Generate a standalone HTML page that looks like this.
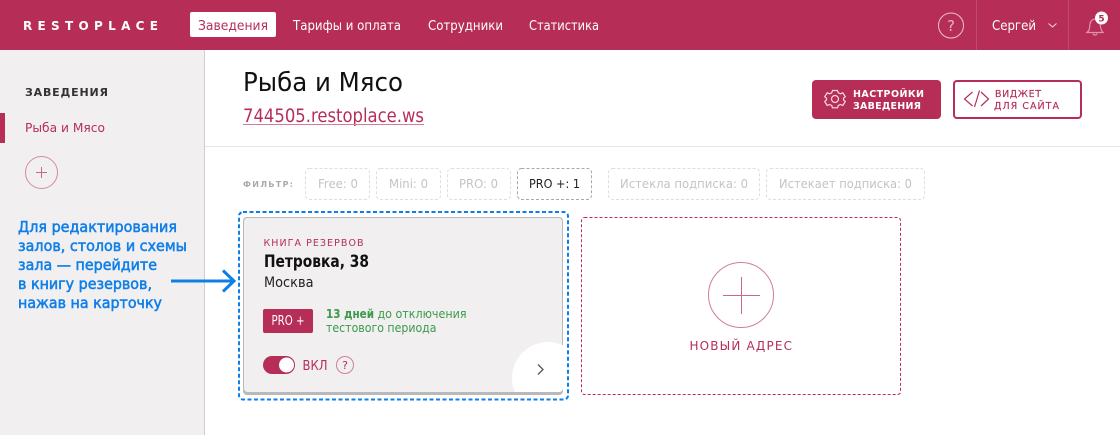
<!DOCTYPE html>
<html lang="ru"><head><meta charset="utf-8"><title>Restoplace</title>
<style>
html,body{margin:0;padding:0;background:#fff;width:1120px;height:435px;overflow:hidden}
svg{display:block}
text{font-family:"DejaVu Sans","Liberation Sans",sans-serif;white-space:pre}
</style></head><body>
<svg width="1120" height="435" viewBox="0 0 1120 435" xmlns="http://www.w3.org/2000/svg">
<rect width="1120" height="435" fill="#fff"/>
<!-- sidebar -->
<rect x="0" y="50" width="204" height="385" fill="#f1eff0"/>
<rect x="204" y="50" width="1" height="385" fill="#cfcfcf"/>
<rect x="205" y="146" width="915" height="1" fill="#e6e6e6"/>
<rect x="0" y="113" width="5" height="30" fill="#b62e58"/>
<text x="25" y="96" font-size="11" font-weight="700" fill="#333" textLength="83" lengthAdjust="spacing">ЗАВЕДЕНИЯ</text>
<text x="25" y="132" font-size="12.500" fill="#b62e58" textLength="80" lengthAdjust="spacingAndGlyphs">Рыба и Мясо</text>
<circle cx="41.500" cy="172.500" r="16" fill="none" stroke="#d58aa3" stroke-width="1"/>
<path d="M36 172.500H47M41.500 167V178" stroke="#c9688a" stroke-width="1" fill="none"/>
<g font-size="15.500" fill="#0f7fe8" stroke="#0f7fe8" stroke-width="0.550">
<text x="18" y="232" textLength="159" lengthAdjust="spacingAndGlyphs">Для редактирования</text>
<text x="18" y="251" textLength="169" lengthAdjust="spacingAndGlyphs">залов, столов и схемы</text>
<text x="18" y="270" textLength="139" lengthAdjust="spacingAndGlyphs">зала — перейдите</text>
<text x="18" y="289" textLength="134" lengthAdjust="spacingAndGlyphs">в книгу резервов,</text>
<text x="18" y="308" textLength="144" lengthAdjust="spacingAndGlyphs">нажав на карточку</text>
</g>
<path d="M171 281H233M223 270.500L234 281L223 291.500" fill="none" stroke="#0f7fe8" stroke-width="3"/>
<!-- header -->
<rect width="1120" height="50" fill="#b62e58"/>
<text x="23" y="30" font-size="12" font-weight="700" fill="#fff" textLength="135" lengthAdjust="spacing">RESTOPLACE</text>
<rect x="190" y="12" width="86" height="25" rx="2" fill="#fff"/>
<text x="198" y="30" font-size="13.500" fill="#b62e58" textLength="70" lengthAdjust="spacingAndGlyphs">Заведения</text>
<g font-size="13.500" fill="#fff">
<text x="293" y="30" textLength="108" lengthAdjust="spacingAndGlyphs">Тарифы и оплата</text>
<text x="428" y="30" textLength="75" lengthAdjust="spacingAndGlyphs">Сотрудники</text>
<text x="529" y="30" textLength="70" lengthAdjust="spacingAndGlyphs">Статистика</text>
<text x="992" y="30" textLength="44" lengthAdjust="spacingAndGlyphs">Сергей</text>
</g>
<circle cx="951" cy="25.500" r="12.500" fill="none" stroke="#e9c3cf" stroke-width="1"/>
<text x="951" y="31" font-size="15" fill="#e3b4c3" text-anchor="middle">?</text>
<rect x="976" y="0" width="1" height="50" fill="#c2496e"/>
<rect x="1068" y="0" width="1" height="50" fill="#c2496e"/>
<path d="M1048.500 23.500L1052.500 27L1056.500 23.500" fill="none" stroke="#f0d5de" stroke-width="1"/>
<path d="M1087 32.500C1090 30 1089.500 27 1090 24C1090.500 20.500 1093 19 1095 19C1098 19 1099.500 21 1100 24C1100.500 27 1100.500 30 1103 32.500Z" fill="none" stroke="#dd94ab" stroke-width="1.200"/>
<path d="M1093 33.500C1093.500 35.500 1096.500 35.500 1097 33.500" fill="none" stroke="#dd94ab" stroke-width="1.200"/>
<circle cx="1101.500" cy="18" r="6.500" fill="#fff"/>
<text x="1101.500" y="21.500" font-size="9" font-weight="700" fill="#b62e58" text-anchor="middle">5</text>
<!-- title -->
<text x="243" y="91" font-size="26" fill="#111" textLength="160" lengthAdjust="spacingAndGlyphs">Рыба и Мясо</text>
<text x="243" y="122" font-size="18.500" fill="#b62e58" textLength="181" lengthAdjust="spacingAndGlyphs">744505.restoplace.ws</text>
<rect x="243" y="124" width="181" height="1" fill="#cf7f9a"/>
<!-- buttons -->
<rect x="812" y="80" width="129" height="39" rx="4" fill="#b62e58"/>
<g fill="none" stroke="#f3dbe3" stroke-width="1.200">
<circle cx="835" cy="99" r="3.500"/>
<path d="M832.500 90.500H837.500L838.300 92.800L840.500 93.800L842.800 92.800L845.300 96.800L843.500 98.300V100L845.300 101.500L842.800 105.500L840.500 104.500L838.300 105.500L837.500 107.800H832.500L831.700 105.500L829.500 104.500L827.200 105.500L824.700 101.500L826.500 100V98.300L824.700 96.800L827.200 92.800L829.500 93.800L831.700 92.800Z"/>
</g>
<g font-size="9.500" font-weight="700" fill="#fff">
<text x="853" y="97" textLength="71" lengthAdjust="spacing">НАСТРОЙКИ</text>
<text x="853" y="109" textLength="68" lengthAdjust="spacing">ЗАВЕДЕНИЯ</text>
</g>
<rect x="954" y="81" width="127" height="37" rx="3" fill="#fff" stroke="#b62e58" stroke-width="2"/>
<path d="M972.500 92L964.500 99L972.500 106M974.500 107L979.500 90.500M981 92L988.500 99L981 106" fill="none" stroke="#b62e58" stroke-width="1.200"/>
<g font-size="9.500" fill="#b62e58" stroke="#b62e58" stroke-width="0.150">
<text x="995" y="97" textLength="46" lengthAdjust="spacing">ВИДЖЕТ</text>
<text x="994" y="109" textLength="65" lengthAdjust="spacing">ДЛЯ САЙТА</text>
</g>
<!-- filters -->
<text x="243" y="187" font-size="8" font-weight="700" fill="#aaa" textLength="50" lengthAdjust="spacing">ФИЛЬТР:</text>
<g fill="none" stroke="#dedede" stroke-dasharray="3 2">
<rect x="305.500" y="168.500" width="64" height="31" rx="4"/>
<rect x="376.500" y="168.500" width="64" height="31" rx="4"/>
<rect x="447.500" y="168.500" width="63" height="31" rx="4"/>
<rect x="608.500" y="168.500" width="151" height="31" rx="4"/>
<rect x="766.500" y="168.500" width="158" height="31" rx="4"/>
</g>
<rect x="517.500" y="168.500" width="74" height="31" rx="4" fill="none" stroke="#a8a8a8" stroke-dasharray="3 2"/>
<g font-size="12.500" fill="#c4c4c4">
<text x="318" y="188" textLength="40" lengthAdjust="spacingAndGlyphs">Free: 0</text>
<text x="389" y="188" textLength="39" lengthAdjust="spacingAndGlyphs">Mini: 0</text>
<text x="459" y="188" textLength="39" lengthAdjust="spacingAndGlyphs">PRO: 0</text>
<text x="620" y="188" textLength="128" lengthAdjust="spacingAndGlyphs">Истекла подписка: 0</text>
<text x="779" y="188" textLength="133" lengthAdjust="spacingAndGlyphs">Истекает подписка: 0</text>
</g>
<text x="529" y="188" font-size="12.500" fill="#222" textLength="51" lengthAdjust="spacingAndGlyphs">PRO +: 1</text>
<!-- card -->
<rect x="239" y="212" width="329" height="187.500" rx="4" fill="none" stroke="#0f7fe8" stroke-width="2" stroke-dasharray="4 2.500"/>
<clipPath id="c"><rect x="243" y="217" width="320" height="175" rx="4"/></clipPath>
<rect x="243" y="217" width="320" height="178" rx="4" fill="#b9b9b9"/>
<rect x="244" y="218" width="318" height="174" rx="3.500" fill="#f1eff0"/>
<circle cx="548" cy="378" r="36" fill="#fff" clip-path="url(#c)"/>
<path d="M538 364.500L543 369.500L538 374.500" fill="none" stroke="#555" stroke-width="1.300"/>
<text x="263.500" y="246" font-size="9.500" fill="#b62e58" textLength="100" lengthAdjust="spacing">КНИГА РЕЗЕРВОВ</text>
<text x="264" y="267" font-size="16.500" font-weight="700" fill="#111" textLength="105" lengthAdjust="spacingAndGlyphs">Петровка, 38</text>
<text x="264" y="287" font-size="14.500" fill="#222" textLength="49.500" lengthAdjust="spacingAndGlyphs">Москва</text>
<rect x="263" y="309" width="50" height="24" rx="2" fill="#b62e58"/>
<text x="271.500" y="325" font-size="13" fill="#fff" textLength="33" lengthAdjust="spacingAndGlyphs">PRO +</text>
<text x="326" y="318" font-size="12" font-weight="700" fill="#3a9a4a" textLength="48" lengthAdjust="spacingAndGlyphs">13 дней</text>
<text x="377.500" y="318" font-size="12" fill="#3a9a4a" textLength="89" lengthAdjust="spacingAndGlyphs">до отключения</text>
<text x="326" y="332" font-size="12" fill="#3a9a4a" textLength="110.500" lengthAdjust="spacingAndGlyphs">тестового периода</text>
<rect x="263" y="356" width="32" height="18" rx="9" fill="#b62e58"/>
<circle cx="286.500" cy="365" r="7.500" fill="#fff"/>
<text x="302.500" y="370" font-size="13" fill="#b62e58" textLength="25" lengthAdjust="spacingAndGlyphs">ВКЛ</text>
<circle cx="345" cy="365" r="8.500" fill="none" stroke="#d07f9b" stroke-width="1"/>
<text x="345" y="369" font-size="11" fill="#b62e58" text-anchor="middle">?</text>
<!-- new -->
<rect x="581.500" y="217.500" width="319" height="177" rx="3" fill="none" stroke="#c42a5b" stroke-width="1" stroke-dasharray="3 2"/>
<circle cx="741" cy="295" r="32.500" fill="none" stroke="#cf7f9a" stroke-width="1"/>
<path d="M723 295.500H760M741.500 277V314" stroke="#c9688a" stroke-width="1" fill="none"/>
<text x="689.500" y="350" font-size="12" fill="#b62e58" textLength="102.500" lengthAdjust="spacing">НОВЫЙ АДРЕС</text>
</svg>
</body></html>
